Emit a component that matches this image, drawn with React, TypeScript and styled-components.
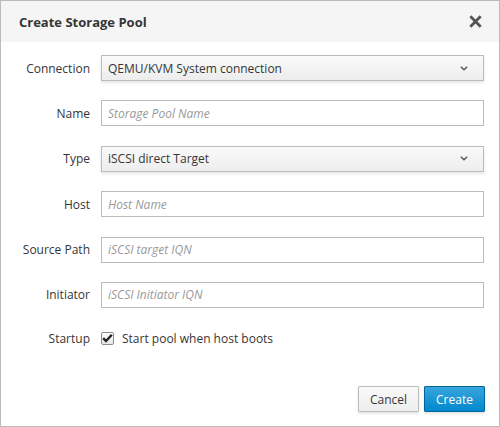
import React from "react";
import styled, { createGlobalStyle } from "styled-components";

const Global = createGlobalStyle`
  html, body { margin: 0; padding: 0; background: #fff; }
  body { font-family: "Open Sans", "Liberation Sans", sans-serif; font-size: 12px; color: #363636; }
  * { box-sizing: border-box; }
`;

const Dialog = styled.div`
  width: 500px;
  height: 427px;
  border: 1px solid #bbb;
  display: flex;
  flex-direction: column;
  background: #fff;
`;

const Header = styled.div`
  height: 41px;
  background: #f5f5f5;
  display: flex;
  align-items: center;
  justify-content: space-between;
  padding: 0 16px 0 18px;
`;

const Title = styled.h1`
  margin: 0;
  font-size: 13px;
  font-weight: 700;
  color: #363636;
`;

const CloseButton = styled.button`
  border: 0;
  background: transparent;
  padding: 0;
  width: 15px;
  height: 15px;
  display: flex;
  align-items: center;
  justify-content: center;
  cursor: pointer;
`;

const Form = styled.div`
  display: grid;
  grid-template-columns: 89px 1fr;
  column-gap: 11px;
  row-gap: 19.4px;
  padding: 13px 15px 0 0;
  align-items: center;
`;

const Label = styled.label`
  text-align: right;
  font-size: 12px;
  color: #363636;
`;

const Field = styled.div<{ $select?: boolean }>`
  height: 26px;
  border: 1px solid #bbb;
  display: flex;
  align-items: center;
  justify-content: space-between;
  padding: 0 15px 0 6px;
  background: ${(p) => (p.$select ? "linear-gradient(#fafafa, #ededed)" : "#fff")};
  box-shadow: ${(p) => (p.$select ? "0 2px 3px rgba(3,3,3,0.1)" : "none")};
`;

const Value = styled.span`
  font-size: 12px;
  color: #363636;
`;

const Placeholder = styled.span`
  font-size: 12px;
  font-style: italic;
  color: #999;
`;

const CheckRow = styled.div`
  display: flex;
  align-items: center;
  gap: 8px;
  height: 22px;
`;

const Box = styled.span`
  width: 13px;
  height: 13px;
  border: 1px solid #8b8d8f;
  border-radius: 2px;
  background: linear-gradient(#fff, #e6e6e6);
  display: flex;
  align-items: center;
  justify-content: center;
`;

const Footer = styled.div`
  margin-top: auto;
  display: flex;
  justify-content: flex-end;
  gap: 5px;
  padding: 0 14px 14px 0;
`;

const Button = styled.button<{ $primary?: boolean }>`
  height: 26px;
  min-width: 61px;
  padding: 0 10px;
  font-family: "Open Sans", "Liberation Sans", sans-serif;
  font-size: 12px;
  border: 1px solid ${(p) => (p.$primary ? "#00659c" : "#bbb")};
  color: ${(p) => (p.$primary ? "#fff" : "#363636")};
  background: ${(p) =>
    p.$primary ? "linear-gradient(#39a5dc, #0088ce)" : "linear-gradient(#fafafa, #ededed)"};
  border-radius: 1px;
  box-shadow: 0 2px 3px rgba(3,3,3,0.1);
`;

const Chevron = () => (
  <svg width="8" height="5" viewBox="0 0 8 5">
    <path d="M0.8 0.8 L4 3.8 L7.2 0.8" fill="none" stroke="#4d5258" strokeWidth="1.3" />
  </svg>
);

const Row = ({ label, children }: { label: string; children: React.ReactNode }) => (
  <>
    <Label>{label}</Label>
    {children}
  </>
);

export default function App() {
  return (
    <>
      <Global />
      <Dialog>
        <Header>
          <Title>Create Storage Pool</Title>
          <CloseButton aria-label="Close">
            <svg width="13" height="13" viewBox="0 0 13 13">
              <path d="M1.3 1.3 L11.7 11.7 M11.7 1.3 L1.3 11.7" stroke="#555" strokeWidth="2.8" />
            </svg>
          </CloseButton>
        </Header>
        <Form>
          <Row label="Connection">
            <Field $select>
              <Value>QEMU/KVM System connection</Value>
              <Chevron />
            </Field>
          </Row>
          <Row label="Name">
            <Field>
              <Placeholder>Storage Pool Name</Placeholder>
            </Field>
          </Row>
          <Row label="Type">
            <Field $select>
              <Value>iSCSI direct Target</Value>
              <Chevron />
            </Field>
          </Row>
          <Row label="Host">
            <Field>
              <Placeholder>Host Name</Placeholder>
            </Field>
          </Row>
          <Row label="Source Path">
            <Field>
              <Placeholder>iSCSI target IQN</Placeholder>
            </Field>
          </Row>
          <Row label="Initiator">
            <Field>
              <Placeholder>iSCSI Initiator IQN</Placeholder>
            </Field>
          </Row>
          <Row label="Startup">
            <CheckRow>
              <Box>
                <svg width="11" height="10" viewBox="0 0 11 10">
                  <path d="M1.2 5.2 L4 8 L9.8 1.8" fill="none" stroke="#222" strokeWidth="2.4" />
                </svg>
              </Box>
              <Value>Start pool when host boots</Value>
            </CheckRow>
          </Row>
        </Form>
        <Footer>
          <Button>Cancel</Button>
          <Button $primary>Create</Button>
        </Footer>
      </Dialog>
    </>
  );
}
